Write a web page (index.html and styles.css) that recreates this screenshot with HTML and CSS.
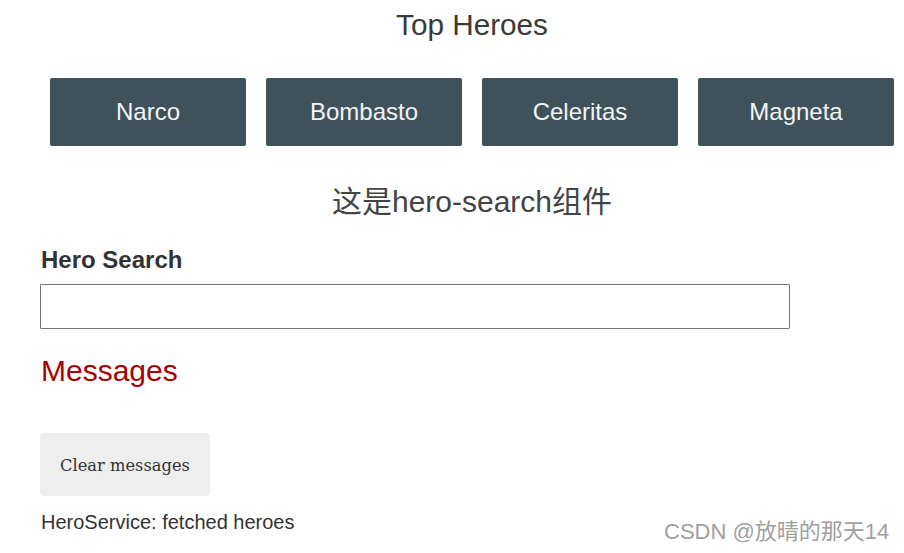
FILE: index.html
```html
<!DOCTYPE html>
<html lang="zh">
<head>
<meta charset="utf-8">
<title>Top Heroes</title>
<link rel="stylesheet" href="styles.css">
</head>
<body>
<div class="page">
  <h3 class="title">Top Heroes</h3>
  <div class="heroes-menu">
    <a class="hero" href="#">Narco</a>
    <a class="hero" href="#">Bombasto</a>
    <a class="hero" href="#">Celeritas</a>
    <a class="hero" href="#">Magneta</a>
  </div>
  <h2 class="component-title">这是hero-search组件</h2>
  <div class="search">
    <label class="search-label" for="search-box">Hero Search</label>
    <input class="search-box" id="search-box" type="text">
  </div>
  <div class="messages">
    <h2 class="messages-title">Messages</h2>
    <button class="clear">Clear messages</button>
    <div class="message">HeroService: fetched heroes</div>
  </div>
</div>
<div class="watermark">CSDN @放晴的那天14</div>
</body>
</html>
```
FILE: styles.css
```css
html, body {
  margin: 0;
  padding: 0;
  background: #fff;
}
body {
  font-family: "Liberation Sans", Arial, "Noto Sans CJK SC", sans-serif;
  color: #333;
  position: relative;
  height: 553px;
  overflow: hidden;
}
.page {
  padding-left: 40px;
}
.title {
  margin: 8px 0 0;
  font-size: 29.7px;
  line-height: 34px;
  font-weight: normal;
  text-align: center;
  color: #3a3a3a;
}
.heroes-menu {
  display: flex;
  gap: 20px;
  padding-left: 10px;
  margin-top: 36px;
}
.hero {
  display: block;
  width: 196px;
  height: 68px;
  line-height: 68px;
  text-align: center;
  background: #3f525c;
  color: #f4f4f4;
  font-size: 24px;
  text-decoration: none;
  border-radius: 2px;
}
.component-title {
  margin: 38px 0 0;
  font-size: 30px;
  line-height: 36px;
  font-weight: normal;
  text-align: center;
  color: #444;
}
.search {
  margin-top: 26px;
}
.search-label {
  display: block;
  font-size: 24px;
  line-height: 28px;
  font-weight: bold;
  color: #333;
  padding-left: 1px;
}
.search-box {
  display: block;
  box-sizing: border-box;
  margin-top: 10px;
  width: 750px;
  height: 45px;
  border: 1px solid #767676;
  border-radius: 1px;
  padding: 0 8px;
  font-size: 20px;
}
.messages-title {
  margin: 24px 0 0;
  font-size: 30px;
  line-height: 36px;
  font-weight: normal;
  color: #a80000;
  padding-left: 1px;
}
.clear {
  display: block;
  margin-top: 44px;
  width: 170px;
  height: 63px;
  border: none;
  border-radius: 4px;
  background: #eee;
  color: #333;
  font-family: "DejaVu Serif", "Liberation Serif", serif;
  font-size: 16.3px;
  padding: 2px 0 0;
}
.message {
  margin-top: 14px;
  font-size: 20px;
  line-height: 24px;
  color: #333;
  padding-left: 1px;
}
.watermark {
  position: absolute;
  left: 664px;
  top: 518px;
  font-size: 22px;
  line-height: 28px;
  color: #a0a0a0;
  white-space: nowrap;
}
```
